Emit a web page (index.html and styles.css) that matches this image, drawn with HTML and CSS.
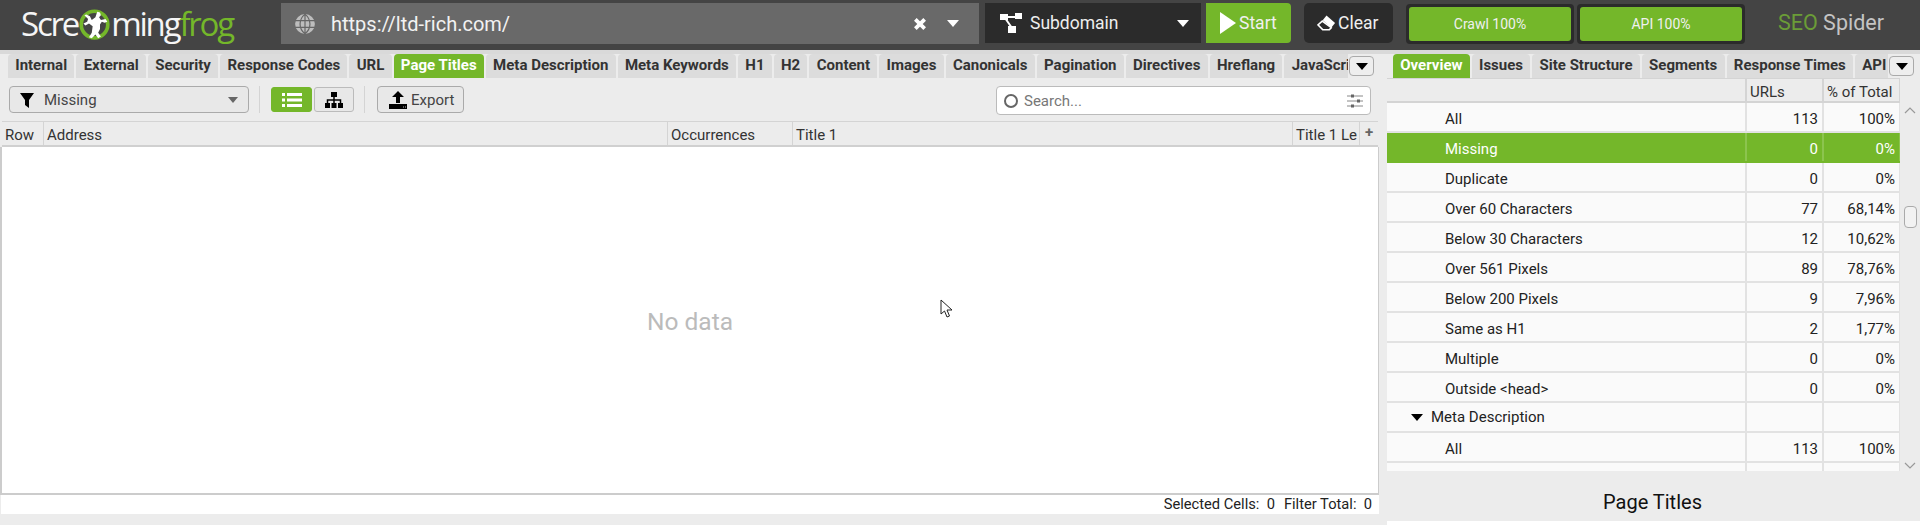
FILE: index.html
```html
<!DOCTYPE html>
<html lang="en">
<head>
<meta charset="utf-8">
<title>Screaming Frog SEO Spider</title>
<link rel="stylesheet" href="styles.css">
</head>
<body>
<header class="topbar">
  <div class="logo"><span>Scre</span><svg class="logo-mark" viewBox="0 0 36 40" width="33" height="37"><circle cx="18" cy="20" r="14.500" fill="none" stroke="#74b72a" stroke-width="4"/><path d="M9 9l4 2 2 4 4-3 2-6 3 1 1 3-2 2 2 3 5-1 2 3-3 1-3-1-2 3 0 5-2 4 3 4-3 2-3-4-4 4-3-1 3-5 1-7-4-3-4 2-2-2 4-2 1-3-4-4z" fill="#fff"/></svg><span>ming</span><span class="logo-green">frog</span></div>
  <div class="urlbox">
    <svg class="globe" viewBox="0 0 20 20" width="22" height="22"><circle cx="10" cy="10" r="9" fill="#bdbdbd"/><path d="M1 7h18M1 13h18M10 1v18M10 1c-6 5-6 13 0 18M10 1c6 5 6 13 0 18" fill="none" stroke="#666" stroke-width="1.100"/></svg>
    <span class="url">https://ltd-rich.com/</span>
    <svg class="urlx" viewBox="0 0 12 12" width="14" height="14"><path d="M2 2l8 8M10 2l-8 8" stroke="#fff" stroke-width="3.200"/></svg>
    <i class="caret caret-light urlcaret"></i>
  </div>
  <div class="mode">
    <svg viewBox="0 0 24 22" width="24" height="22"><path d="M5 5h14M6 6l7 10" stroke="#fff" stroke-width="2" fill="none"/><rect x="1" y="2" width="8" height="6" fill="#fff"/><rect x="16" y="1" width="7" height="6" fill="#fff"/><rect x="9" y="14" width="8" height="7" fill="#fff"/></svg>
    <span class="mode-label">Subdomain</span>
    <i class="caret caret-light"></i>
  </div>
  <button class="start"><svg viewBox="0 0 16 22" width="16" height="22"><path d="M0 0l16 11L0 22z" fill="#fff"/></svg>Start</button>
  <button class="clear"><svg viewBox="0 0 20 18" width="19" height="18"><path d="M10 1l9 8-4 5-9-8z" fill="#fff"/><path d="M5.500 7L1 11l5 5h7l2-2z" fill="none" stroke="#fff" stroke-width="1.600"/></svg>Clear</button>
  <div class="progress"><span>Crawl 100%</span></div>
  <div class="progress progress-api"><span>API 100%</span></div>
  <div class="brand"><span class="brand-seo">SEO</span> Spider</div>
</header>

<main class="workspace">
  <section class="left">
    <div class="tabstrip">
      <nav class="tabs tabs-left">
        <a class="tab">Internal</a><a class="tab">External</a><a class="tab">Security</a><a class="tab">Response Codes</a><a class="tab">URL</a><a class="tab active">Page Titles</a><a class="tab">Meta Description</a><a class="tab">Meta Keywords</a><a class="tab">H1</a><a class="tab">H2</a><a class="tab">Content</a><a class="tab">Images</a><a class="tab">Canonicals</a><a class="tab">Pagination</a><a class="tab">Directives</a><a class="tab">Hreflang</a><a class="tab">JavaScript</a>
      </nav>
      <button class="tabmenu"><i class="caret caret-dark"></i></button>
    </div>
    <div class="toolbar">
      <div class="filter">
        <svg viewBox="0 0 14 16" width="14" height="16"><path d="M0 1h14L9 8v8L5 13V8z" fill="#000"/></svg>
        <span>Missing</span>
        <i class="caret caret-grey"></i>
      </div>
      <span class="sep"></span>
      <button class="view view-on"><svg viewBox="0 0 20 16" width="20" height="16"><path d="M0 1h3v3H0zM5 1h15v3H5zM0 6.500h3v3H0zM5 6.500h15v3H5zM0 12h3v3H0zM5 12h15v3H5z" fill="#fff"/></svg></button>
      <button class="view"><svg viewBox="0 0 18 16" width="18" height="16"><path d="M6 0h6v5H6zM0 11h5v5H0zM6.500 11h5v5h-5zM13 11h5v5h-5z" fill="#000"/><path d="M9 5v6M2.500 11V8h13v3" stroke="#000" stroke-width="1.500" fill="none"/></svg></button>
      <span class="sep sep-2"></span>
      <button class="export"><svg viewBox="0 0 18 18" width="18" height="18"><path d="M9 0l6 6h-4v6H7V6H3z" fill="#000"/><path d="M0 13h18v5H0z" fill="#000"/><path d="M14 16h1M16 16h1" stroke="#bbb"/></svg>Export</button>
      <div class="search">
        <span class="search-ring"></span>
        <span class="search-text">Search...</span>
        <svg viewBox="0 0 16 16" width="16" height="16"><path d="M0 3h16M0 8h16M0 13h16" stroke="#888" stroke-width="1"/><path d="M4 1.500h3v3H4zM10 6.500h3v3h-3zM4 11.500h3v3H4z" fill="#666"/></svg>
      </div>
    </div>
    <div class="gridhead">
      <div class="hcell h-row">Row</div>
      <div class="hcell h-addr">Address</div>
      <div class="hcell h-occ">Occurrences</div>
      <div class="hcell h-title">Title 1</div>
      <div class="hcell h-len">Title 1 Le</div>
      <div class="hcell h-plus">+</div>
    </div>
    <div class="gridbody">
      <span class="nodata">No data</span>
      <svg class="cursor" viewBox="0 0 13 20" width="13" height="20"><path d="M1 1v14l3.500-3 2.500 6 2.500-1-2.500-6h5z" fill="#fff" stroke="#222" stroke-width="1"/></svg>
    </div>
    <div class="status"><span>Selected Cells:&nbsp; 0</span><span>Filter Total:&nbsp; 0</span></div>
  </section>

  <aside class="right">
    <div class="tabstrip tabstrip-right">
      <nav class="tabs tabs-right">
        <a class="tab active">Overview</a><a class="tab">Issues</a><a class="tab">Site Structure</a><a class="tab">Segments</a><a class="tab">Response Times</a><a class="tab">API</a>
      </nav>
      <button class="tabmenu"><i class="caret caret-dark"></i></button>
    </div>
    <div class="overview">
      <div class="ov-table">
        <div class="ov-head"><div class="ov-name"></div><div class="ov-num">URLs</div><div class="ov-num">% of Total</div></div>
        <div class="ov-rows">
          <div class="ov-row"><div class="ov-name">All</div><div class="ov-num">113</div><div class="ov-num">100%</div></div>
          <div class="ov-row selected"><div class="ov-name">Missing</div><div class="ov-num">0</div><div class="ov-num">0%</div></div>
          <div class="ov-row"><div class="ov-name">Duplicate</div><div class="ov-num">0</div><div class="ov-num">0%</div></div>
          <div class="ov-row"><div class="ov-name">Over 60 Characters</div><div class="ov-num">77</div><div class="ov-num">68,14%</div></div>
          <div class="ov-row"><div class="ov-name">Below 30 Characters</div><div class="ov-num">12</div><div class="ov-num">10,62%</div></div>
          <div class="ov-row"><div class="ov-name">Over 561 Pixels</div><div class="ov-num">89</div><div class="ov-num">78,76%</div></div>
          <div class="ov-row"><div class="ov-name">Below 200 Pixels</div><div class="ov-num">9</div><div class="ov-num">7,96%</div></div>
          <div class="ov-row"><div class="ov-name">Same as H1</div><div class="ov-num">2</div><div class="ov-num">1,77%</div></div>
          <div class="ov-row"><div class="ov-name">Multiple</div><div class="ov-num">0</div><div class="ov-num">0%</div></div>
          <div class="ov-row"><div class="ov-name">Outside &lt;head&gt;</div><div class="ov-num">0</div><div class="ov-num">0%</div></div>
          <div class="ov-row"><div class="ov-name ov-group"><i class="caret caret-dark"></i>Meta Description</div><div class="ov-num"></div><div class="ov-num"></div></div>
          <div class="ov-row"><div class="ov-name">All</div><div class="ov-num">113</div><div class="ov-num">100%</div></div>
          <div class="ov-row"><div class="ov-name"></div><div class="ov-num"></div><div class="ov-num"></div></div>
        </div>
      </div>
      <div class="scroll">
        <svg class="chev" viewBox="0 0 12 7" width="12" height="7"><path d="M1 6l5-5 5 5" fill="none" stroke="#999" stroke-width="1.200"/></svg>
        <span class="thumb"></span>
        <svg class="chev chev-down" viewBox="0 0 12 7" width="12" height="7"><path d="M1 1l5 5 5-5" fill="none" stroke="#999" stroke-width="1.200"/></svg>
      </div>
    </div>
    <h2 class="pane-title">Page Titles</h2>
    <div class="pane-body"></div>
  </aside>
</main>
</body>
</html>
```
FILE: styles.css
```css
* { box-sizing: border-box; }
html, body { margin: 0; height: 525px; overflow: hidden; }
body { font-family: Roboto, "Liberation Sans", sans-serif; background: #ececec; color: #222; display: flex; flex-direction: column; }
button { font-family: inherit; cursor: default; }
.caret { display: block; width: 0; height: 0; border-left: 6px solid transparent; border-right: 6px solid transparent; border-top: 7px solid #000; }
.caret-light { border-top-color: #fff; }
.caret-dark { border-top-color: #000; }
.caret-grey { border-top-color: #666; border-left-width: 5px; border-right-width: 5px; border-top-width: 6px; }

.topbar { height: 50px; flex: none; background: #444; display: flex; align-items: flex-start; padding-top: 3px; }
.logo { width: 281px; height: 41px; padding-left: 21px; display: flex; align-items: center; font-family: "Open Sans", sans-serif; font-size: 33px; letter-spacing: -2.200px; color: #f5f5f5; font-weight: 400; }
.logo-mark { flex: none; margin: 2px 0 0 0; }
.logo-green { color: #74b72a; }
.urlbox { width: 698px; height: 41px; background: #696969; display: flex; align-items: center; padding-left: 13px; }
.globe { flex: none; }
.url { font-size: 20px; color: #f2f2f2; margin-left: 15px; width: 552px; }
.urlx { flex: none; margin-left: 30px; }
.urlcaret { margin-left: 20px; }
.mode { width: 216px; height: 40px; margin-left: 6px; background: #2b2b2b; display: flex; align-items: center; padding-left: 14px; color: #eee; }
.mode-label { font-size: 17.500px; margin-left: 7px; width: 147px; }
.start { width: 85px; height: 40px; margin-left: 5px; background: #74b72a; border: 0; border-radius: 0 4px 4px 0; color: #f0f0f0; font-size: 17.500px; display: flex; align-items: center; gap: 3px; padding: 0 0 0 14px; }
.clear { width: 89px; height: 40px; margin-left: 13px; background: #2b2b2b; border: 0; border-radius: 5px; color: #f0f0f0; font-size: 17.500px; display: flex; align-items: center; gap: 2px; padding: 0 0 0 13px; }
.progress { width: 168px; height: 40px; margin: 1px 0 0 13px; background: #2b2b2b; border-radius: 4px; padding: 3px; }
.progress span { display: flex; height: 100%; align-items: center; justify-content: center; background: #74b72a; border-radius: 3px; color: #f0f0f0; font-size: 14px; }
.progress-api { margin-left: 3px; }
.brand { margin: 7px 0 0 33px; font-size: 21.500px; color: #c4c4c4; white-space: nowrap; }
.brand-seo { color: #6b9c37; }

.workspace { flex: 1; display: flex; min-height: 0; border-top: 4px solid #d9d9d9; }
.left { width: 1387px; flex: none; display: flex; flex-direction: column; }
.right { flex: 1; min-width: 0; display: flex; flex-direction: column; }

.tabstrip { height: 24px; flex: none; display: flex; background: #ececec; }
.tabs { display: flex; gap: 2px; overflow: hidden; white-space: nowrap; }
.tabs-left { width: 1340px; margin-left: 8px; }
.tabs-right { width: 495px; margin-left: 6px; }
.tab { flex: none; height: 24px; line-height: 23px; padding: 0 7.250px; background: #dcdcdc; border-radius: 4px 4px 0 0; font-size: 15px; font-weight: 700; color: #333; }
.tab.active { background: #74b72a; color: #fff; }
.tabmenu { width: 25px; height: 20px; margin: 2px 0 0 1px; padding: 0; background: #eee; border: 1px solid #aaa; border-radius: 4px; display: flex; align-items: center; justify-content: center; flex: none; }

.toolbar { height: 43px; flex: none; display: flex; align-items: flex-start; padding: 8px 0 0 9px; background: #ececec; }
.filter { width: 240px; height: 27px; background: #e8e8e8; border: 1px solid #aaa; border-radius: 4px; display: flex; align-items: center; padding: 0 10px; font-size: 15px; color: #444; }
.filter span { margin-left: 10px; flex: 1; }
.sep { width: 1px; height: 27px; background: #d4d4d4; margin: 0 11px 0 10px; }
.sep-2 { margin: 0 12px 0 10px; }
.view { width: 41px; height: 25px; margin: 1px 2px 0 0; padding: 0; border: 1px solid #bbb; border-radius: 3px; background: #e8e8e8; display: flex; align-items: center; justify-content: center; }
.view + .view { width: 40px; margin-right: 0; }
.view-on { background: #74b72a; border-color: #74b72a; }
.export { width: 87px; height: 27px; padding: 0 0 0 11px; background: #e8e8e8; border: 1px solid #aaa; border-radius: 4px; display: flex; align-items: center; gap: 4px; font-size: 15px; color: #444; }
.search { width: 375px; height: 29px; margin-left: 532px; background: #fff; border: 1px solid #bbb; border-radius: 4px; display: flex; align-items: center; padding: 0 7px 0 7px; font-size: 15px; color: #777; }
.search-ring { width: 14px; height: 14px; border: 2px solid #666; border-radius: 50%; flex: none; }
.search-text { flex: 1; margin-left: 6px; }

.gridhead { height: 26px; flex: none; display: flex; margin: 0 9px 0 2px; background: #ececec; border-top: 1px solid #d4d4d4; border-bottom: 2px solid #d0d0d0; }
.hcell { font-size: 15px; line-height: 26px; padding-left: 3px; border-right: 1px solid #d4d4d4; overflow: hidden; white-space: nowrap; color: #333; flex: none; }
.h-row { width: 42px; }
.h-addr { width: 624px; }
.h-occ { width: 125px; }
.h-title { width: 500px; }
.h-len { width: 67px; }
.h-plus { width: 18px; border-right: 0; font-weight: 700; color: #666; padding-left: 5px; line-height: 20px; }
.gridbody { flex: 1; position: relative; margin-right: 8px; background: #fff; border-left: 2px solid #ccc; border-right: 1px solid #ccc; border-bottom: 2px solid #ccc; display: flex; align-items: center; justify-content: center; padding-top: 2px; }
.nodata { font-size: 24.500px; color: #bbb; }
.cursor { position: absolute; left: 938px; top: 152px; }
.status { height: 19px; flex: none; margin: 0 8px 11px 1px; background: #fff; display: flex; justify-content: flex-end; gap: 9px; padding-right: 7px; font-size: 14.700px; line-height: 18px; color: #222; }

.overview { height: 393px; flex: none; display: flex; background: #ececec; }
.ov-table { width: 513px; flex: none; display: flex; flex-direction: column; overflow: hidden; }
.ov-head { height: 25px; flex: none; display: flex; background: #ececec; border-top: 1px solid #d4d4d4; border-bottom: 2px solid #d4d4d4; font-size: 15px; color: #333; }
.ov-head .ov-num { text-align: left; padding: 0 0 0 3px; line-height: 26px; }
.ov-rows { flex: 1; overflow: hidden; background: #fafafa; }
.ov-row { height: 30px; display: flex; border-bottom: 2px solid #e2e2e2; font-size: 15px; line-height: 32px; color: #222; }
.ov-name { width: 360px; flex: none; padding-left: 58px; border-right: 2px solid #e2e2e2; }
.ov-num { width: 77px; flex: none; text-align: right; padding-right: 4px; border-right: 2px solid #e2e2e2; }
.ov-head .ov-name, .ov-head .ov-num { border-right-color: #d4d4d4; }
.ov-group { padding-left: 24px; display: flex; align-items: center; gap: 8px; }
.selected { background: #74b72a; color: #fff; border-bottom-color: #74b72a; }
.selected .ov-name, .selected .ov-num { border-right-color: #8cc44e; }
.scroll { flex: 1; display: flex; flex-direction: column; align-items: center; padding-top: 29px; }
.thumb { width: 13px; height: 22px; margin-top: 92px; background: #f2f2f2; border: 1px solid #aaa; border-radius: 4px; }
.chev-down { margin-top: auto; margin-bottom: 2px; }
.pane-title { height: 50px; flex: none; margin: 0; font-size: 20px; font-weight: 400; line-height: 62px; text-align: center; color: #111; padding-right: 2px; }
.pane-body { flex: 1; background: #fff; }
```
